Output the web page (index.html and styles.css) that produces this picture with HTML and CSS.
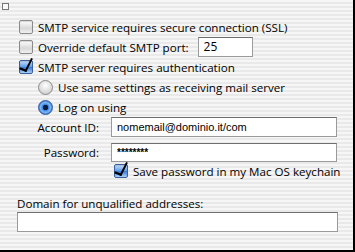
FILE: index.html
```html
<!DOCTYPE html>
<html lang="en">
<head>
    <meta charset="UTF-8">
    <title>SMTP options</title>
    <link rel="stylesheet" href="styles.css">
</head>
<body>
    <div class="pane">
        <div class="corner"></div>

        <div class="row first">
            <span class="check"></span>
            <span class="label">SMTP service requires secure connection (SSL)</span>
        </div>
        <div class="row">
            <span class="check"></span>
            <span class="label">Override default SMTP port:</span>
            <div class="field port">25</div>
        </div>
        <div class="row">
            <span class="check on"></span>
            <span class="label">SMTP server requires authentication</span>
        </div>

        <div class="row sub">
            <span class="radio"></span>
            <span class="label">Use same settings as receiving mail server</span>
        </div>
        <div class="row sub">
            <span class="radio on"></span>
            <span class="label">Log on using</span>
        </div>

        <div class="form-row account">
            <span class="form-label">Account ID:</span>
            <div class="field wide">nomemail@dominio.it/com</div>
        </div>
        <div class="form-row password">
            <span class="form-label">Password:</span>
            <div class="field wide pass">********</div>
        </div>
        <div class="row keychain">
            <span class="check on"></span>
            <span class="label">Save password in my Mac OS keychain</span>
        </div>

        <div class="domain-label">Domain for unqualified addresses:</div>
        <div class="field domain"></div>
    </div>
</body>
</html>
```

FILE: styles.css
```css
* {
    margin: 0;
    padding: 0;
    box-sizing: border-box;
}

body {
    width: 355px;
    height: 252px;
    overflow: hidden;
    font-family: "Open Sans", sans-serif;
    font-size: 11.6px;
    color: #000;
}

.pane {
    width: 355px;
    height: 252px;
    border-right: 2px solid #000;
    border-bottom: 2px solid #000;
    background: repeating-linear-gradient(to bottom, #f6f6f6 0 2px, #e9e9e9 2px 4px);
    display: flex;
    flex-direction: column;
}

.corner {
    width: 7px;
    height: 7px;
    margin: 3px 0 0 2px;
    border: 1px solid #777;
    background: #fafafa;
}

.row {
    display: flex;
    align-items: center;
    height: 20px;
    padding-left: 19px;
}

.row.first {
    margin-top: 7px;
}

.row.sub {
    padding-left: 38px;
}

.label {
    margin-left: 5px;
    white-space: nowrap;
}

.check {
    position: relative;
    width: 14px;
    height: 14px;
    border: 1px solid #8a8a8a;
    border-radius: 2px;
    background: linear-gradient(to bottom, #ffffff, #d8d8d8 60%, #f0f0f0);
    box-shadow: inset 0 1px 1px rgba(0, 0, 0, 0.15);
    flex: none;
}

.check.on {
    border-color: #3a5f9c;
    background: linear-gradient(to bottom, #c9e0fb, #5d9ae8 50%, #3c7ad8 55%, #a8d0fa);
}

.check.on::after {
    content: "";
    position: absolute;
    left: 2px;
    top: -4px;
    width: 6px;
    height: 12px;
    border-right: 2.5px solid #000;
    border-bottom: 2.5px solid #000;
    transform: skewX(-8deg) rotate(20deg);
}

.radio {
    width: 15px;
    height: 15px;
    border-radius: 50%;
    border: 1px solid #8a8a8a;
    background: radial-gradient(circle at 50% 35%, #ffffff, #d6d6d6 70%, #bdbdbd);
    flex: none;
}

.radio.on {
    border-color: #2d5aa0;
    background: radial-gradient(circle at 50% 50%, #0b1e3c 0 2.5px, #3b86e6 3px, #7fb7f5 5px, #3a6fd0 7px);
}

.field {
    height: 20px;
    background: #fff;
    border: 1px solid #9a9a9a;
    border-top-color: #6f6f6f;
    padding: 1px 0 0 5px;
    font-family: "Liberation Sans", sans-serif;
    font-size: 11px;
    line-height: 16px;
}

.port {
    width: 55px;
    margin-left: 9px;
    font-family: "Open Sans", sans-serif;
    font-size: 12px;
}

.form-row {
    display: flex;
    align-items: center;
    height: 20px;
}

.form-row.password {
    margin-top: 6px;
    height: 19px;
}

.form-label {
    width: 99px;
    text-align: right;
    flex: none;
}

.wide {
    width: 226px;
    height: 100%;
    margin-left: 12px;
    padding-top: 1px;
}

.pass {
    font-size: 10px;
    font-weight: bold;
}

.keychain {
    padding-left: 114px;
    height: 18px;
}

.domain-label {
    margin: 16px 0 0 17px;
    height: 16px;
    line-height: 16px;
}

.domain {
    width: 321px;
    margin-left: 17px;
}
```
